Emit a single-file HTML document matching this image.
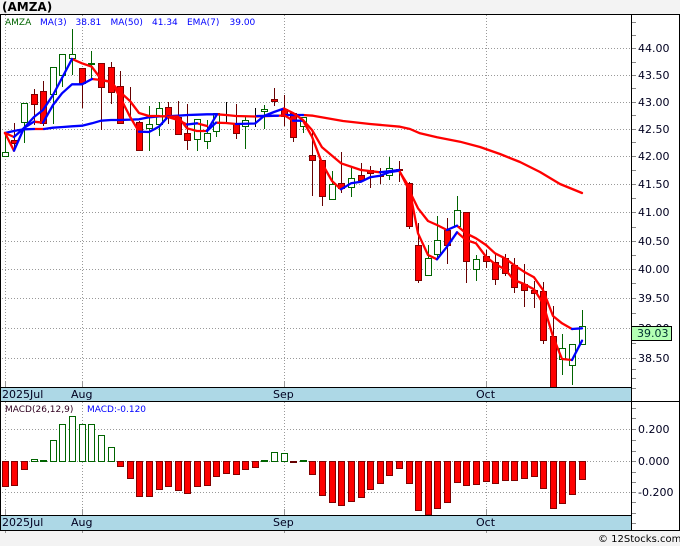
<!DOCTYPE html>
<html><head><meta charset="utf-8"><style>
html,body{margin:0;padding:0;background:#f3f3f3;width:680px;height:546px;overflow:hidden}
svg{display:block}
text{font-family:"DejaVu Sans","Liberation Sans",sans-serif;font-size:11px;fill:#000020}
.c{shape-rendering:crispEdges}
.l{fill:none;stroke-width:2.3;stroke-linejoin:round;stroke-linecap:round}
.r{stroke:#f00}.b{stroke:#00f}
.s{font-size:9px}
</style></head><body>
<svg width="680" height="546" viewBox="0 0 680 546" xmlns="http://www.w3.org/2000/svg">
<rect x="0" y="14" width="680" height="517" fill="#fff" class="c"/>
<text x="2" y="11" style="font-weight:bold;font-size:12px;fill:#000">(AMZA)</text>

<!-- grid -->
<path class="c" fill="none" stroke="#999" stroke-dasharray="1 2" d="M2 48.5H631M2 75.5H631M2 102.5H631M2 129.5H631M2 156.5H631M2 184.5H631M2 212.5H631M2 241.5H631M2 269.5H631M2 298.5H631M2 328.5H631M2 358.5H631M2 429.5H631M2 461.5H631M2 492.5H631"/>
<path class="c" fill="none" stroke="#999" stroke-dasharray="1 2" d="M5.5 15V387M82.5 15V387M284.5 15V387M486.5 15V387M5.5 402V515M82.5 402V515M284.5 402V515M486.5 402V515"/>
<path class="c" fill="none" stroke="#999" d="M5.5 381V387M82.5 381V387M284.5 381V387M486.5 381V387M5.5 509V515M82.5 509V515M284.5 509V515M486.5 509V515M5.5 531V533M82.5 531V533M284.5 531V533M486.5 531V533"/>

<!-- axis ticks -->
<path class="c" fill="none" stroke="#888" d="M632 22.5H636M632 35.5H636M632 48.5H636M632 62.5H636M632 75.5H636M632 88.5H636M632 102.5H636M632 115.5H636M632 129.5H636M632 142.5H636M632 156.5H636M632 170.5H636M632 184.5H636M632 198.5H636M632 212.5H636M632 227.5H636M632 241.5H636M632 255.5H636M632 269.5H636M632 283.5H636M632 298.5H636M632 313.5H636M632 343.5H636M632 358.5H636M632 369.5H636M632 378.5H636M632 388.5H636M632 408.5H636M632 418.5H636M632 429.5H636M632 440.5H636M632 451.5H636M632 461.5H636M632 472.5H636M632 482.5H636M632 492.5H636M632 502.5H636M632 513.5H636M632 523.5H636"/>

<!-- wicks -->
<path class="c" fill="none" stroke="#000" d="M226.5 102V123M255.5 108V127"/>
<path class="c" fill="none" stroke="#660000" d="M14.5 123V151M34.5 89V125M43.5 81V126M82.5 68V108M101.5 63V130M111.5 62V104M120.5 71V123M130.5 87V118M139.5 121V151M168.5 102V124M178.5 101V135M187.5 104V150M236.5 104V139M274.5 88V106M284.5 95V126M293.5 113V142M312.5 132V196M322.5 160V206M341.5 152V193M361.5 163V181M370.5 166V188M380.5 168V184M399.5 161V182M409.5 182V229M418.5 223V283M447.5 218V264M466.5 212V283M486.5 250V268M495.5 253V285M505.5 254V276M514.5 258V293M524.5 264V307M534.5 281V308M543.5 282V344M553.5 306V387"/>
<path class="c" fill="none" stroke="#006400" d="M5.5 133V152M24.5 122V143M53.5 94V124M62.5 75V87M72.5 29V75M91.5 51V78M149.5 106V151M159.5 102V136M197.5 139V151M207.5 120V149M216.5 131V137M245.5 116V149M264.5 105V129M303.5 117V133M332.5 171V184M351.5 168V197M389.5 157V180M428.5 245V258M437.5 216V260M457.5 196V210M476.5 255V281M562.5 334V375M572.5 365V385M582.5 310V326"/>

<!-- candle bodies -->
<path class="c" fill="#fff" stroke="#006400" d="M2.5 152.5h6v4h-6zM21.5 103.5h6v19h-6zM50.5 67.5h6v27h-6zM59.5 54.5h6v21h-6zM69.5 54.5h6v4h-6zM146.5 124.5h6v4h-6zM156.5 108.5h6v16h-6zM194.5 119.5h6v20h-6zM204.5 133.5h6v8h-6zM213.5 113.5h6v18h-6zM242.5 120.5h6v6h-6zM261.5 109.5h6v2h-6zM300.5 117.5h6v9h-6zM329.5 184.5h6v15h-6zM348.5 178.5h6v9h-6zM386.5 168.5h6v7h-6zM425.5 258.5h6v17h-6zM434.5 240.5h6v14h-6zM454.5 210.5h6v16h-6zM473.5 259.5h6v10h-6zM559.5 348.5h6v11h-6zM569.5 344.5h6v21h-6zM579.5 326.5h6v18h-6z"/>
<path class="c" fill="#006400" stroke="#006400" d="M88.5 63.5h6v1h-6z"/>
<path class="c" fill="#f00" stroke="#800000" d="M11.5 140.5h6v3h-6zM31.5 94.5h6v10h-6zM40.5 91.5h6v32h-6zM79.5 68.5h6v15h-6zM98.5 63.5h6v24h-6zM108.5 67.5h6v25h-6zM117.5 86.5h6v37h-6zM136.5 122.5h6v28h-6zM165.5 107.5h6v10h-6zM175.5 117.5h6v17h-6zM184.5 133.5h6v7h-6zM233.5 123.5h6v10h-6zM271.5 99.5h6v2h-6zM281.5 109.5h6v7h-6zM290.5 113.5h6v24h-6zM309.5 155.5h6v5h-6zM319.5 160.5h6v36h-6zM338.5 183.5h6v5h-6zM358.5 175.5h6v5h-6zM367.5 170.5h6v3h-6zM396.5 169.5h6v1h-6zM377.5 175.5h6v1h-6zM406.5 183.5h6v43h-6zM415.5 245.5h6v35h-6zM444.5 230.5h6v15h-6zM463.5 212.5h6v49h-6zM483.5 256.5h6v5h-6zM492.5 262.5h6v17h-6zM502.5 258.5h6v15h-6zM511.5 265.5h6v22h-6zM521.5 284.5h6v6h-6zM531.5 290.5h6v3h-6zM540.5 291.5h6v49h-6zM550.5 336.5h6v51h-6z"/>

<!-- MA50 -->
<path class="l r" d="M34 129L44 129M159 116.3L168 116.3M217 114.3L226 115L236 116L255 116.5L284 115.5M303 115L313 115.7L343 121L370 124L400 126.7L410 129L420 133.3L437 137.3L460 141.7L480 147L500 154L520 162L540 172L560 184L582 193"/>
<path class="l b" d="M5 133L15 130.7L24 129.3L34 129M44 129L53 127.7L63 127L72 126.3L82 125.7L92 123.3L101 120.7L111 120L120 120L139 119.3L149 117.3L159 116.3M168 116.3L178 115.7L188 115L197 114.7L207 114.3L217 114.3M257 116L278 115.7M284 115L303 115"/>
<!-- MA3 -->
<path class="l r" d="M5 133L14 150.7M72 59L82 63.3L91.7 66.7L101.7 80L111 81.7L120 97L130 116.7L139 131.7M168 116.7L178 116.7L187 128.3L197 131L207 131M216 122.7L226 123L236 124M284 115L293 120.7M303 120.7L312 136.7L322 163.3L332 181L341 189.3M399 170.7L409 186.7L418 233.3L428 255L437 259.3M457 232.3L466 240L476 243.3L486 256.7L495 264L505 269.3L514 280L524 284L534 289.3L543 303.3L553 336.7L562 359L572 360"/>
<path class="l b" d="M14 150.7L24 128L34 117L43 110L53 95L62 78L72 59M139 131.7L149 132L159 126.7L168 116.7M207 131L216 122.7M236 124L255 123.5L264 116L274 112L284 108.5M293 120.7L303 120.7M341 189.3L351 183.3L361 181.7L370 177.3L380 175.7L389 172.3L399 170.7M437 259.3L447 246.7L457 232.3M572 360L582 340.7"/>
<!-- EMA7 -->
<path class="l r" d="M5 133L14 137M34 121.7L43 122.7M92 79L101 80L111 82L120 92L130 101L139 113L149 116L159 116M168 117L178 120L187 124.5M197 123.3L207 126M284 108.5L293 113L303 120L312 130L322 147.3L341 163.3L361 170L380 172.3M399 170L409 190L418 208.3L428 221L437 225L447 230M457 225.7L466 233.3L476 238.3L486 245L495 253.3L505 258.3L514 265L524 271.7L534 277.3L543 290L553 316L562 323.3L572 329"/>
<path class="l b" d="M14 137L24 128L34 121.7M43 122.7L53 105L62 93.3L72 84.3L82 84.3L92 79M187 124.5L197 123.3M207 131L217 114.3M380 172.3L399 170M447 230L457 225.7M572 329L582 328.3"/>

<!-- MACD bars -->
<path class="c" fill="#fff" stroke="#006400" d="M31.5 459.5h6V461.5h-6zM50.5 440.5h6V461.5h-6zM59.5 424.5h6V461.5h-6zM69.5 416.5h6V461.5h-6zM79.5 424.5h6V461.5h-6zM88.5 424.5h6V461.5h-6zM98.5 435.5h6V461.5h-6zM108.5 447.5h6V461.5h-6zM271.5 452.5h6V461.5h-6zM281.5 453.5h6V461.5h-6z"/>
<path class="c" fill="#006400" stroke="#006400" d="M40.5 460.5h6V461.5h-6zM261.5 460.5h6V461.5h-6zM300.5 460.5h6V461.5h-6z"/>
<path class="c" fill="#660000" stroke="#660000" d="M290.5 461.5h6V462.5h-6z"/>
<path class="c" fill="#f00" stroke="#800000" d="M2.5 461.5h6V486.5h-6zM11.5 461.5h6V485.5h-6zM21.5 461.5h6V469.5h-6zM117.5 461.5h6V466.5h-6zM127.5 461.5h6V478.5h-6zM136.5 461.5h6V496.5h-6zM146.5 461.5h6V496.5h-6zM156.5 461.5h6V489.5h-6zM165.5 461.5h6V486.5h-6zM175.5 461.5h6V490.5h-6zM184.5 461.5h6V493.5h-6zM194.5 461.5h6V486.5h-6zM204.5 461.5h6V485.5h-6zM213.5 461.5h6V476.5h-6zM223.5 461.5h6V473.5h-6zM233.5 461.5h6V474.5h-6zM242.5 461.5h6V469.5h-6zM252.5 461.5h6V467.5h-6zM309.5 461.5h6V474.5h-6zM319.5 461.5h6V495.5h-6zM329.5 461.5h6V502.5h-6zM338.5 461.5h6V505.5h-6zM348.5 461.5h6V501.5h-6zM358.5 461.5h6V497.5h-6zM367.5 461.5h6V489.5h-6zM377.5 461.5h6V483.5h-6zM386.5 461.5h6V475.5h-6zM396.5 461.5h6V468.5h-6zM406.5 461.5h6V483.5h-6zM415.5 461.5h6V510.5h-6zM425.5 461.5h6V515h-6zM434.5 461.5h6V508.5h-6zM444.5 461.5h6V502.5h-6zM454.5 461.5h6V482.5h-6zM463.5 461.5h6V485.5h-6zM473.5 461.5h6V484.5h-6zM483.5 461.5h6V481.5h-6zM492.5 461.5h6V483.5h-6zM502.5 461.5h6V480.5h-6zM511.5 461.5h6V480.5h-6zM521.5 461.5h6V478.5h-6zM531.5 461.5h6V476.5h-6zM540.5 461.5h6V488.5h-6zM550.5 461.5h6V508.5h-6zM559.5 461.5h6V503.5h-6zM569.5 461.5h6V494.5h-6zM579.5 461.5h6V479.5h-6z"/>

<!-- bands -->
<rect class="c" x="1" y="387" width="630" height="14" fill="#add8e6"/>
<rect class="c" x="1" y="515" width="630" height="15" fill="#add8e6"/>
<path class="c" fill="none" stroke="#000" d="M0 14.5H680M0 387.5H631M0 401.5H680M0 515.5H631M0 530.5H680M0.5 14V531M631.5 14V531M679.5 14V531"/>

<!-- legend -->
<text class="s" x="5" y="25" style="fill:#006400">AMZA</text>
<text class="s" x="40" y="25" style="fill:#0000ff">MA(3)</text>
<text class="s" x="75.5" y="25" style="fill:#0000ff">38.81</text>
<text class="s" x="110.5" y="25" style="fill:#0000ff">MA(50)</text>
<text class="s" x="152" y="25" style="fill:#0000ff">41.34</text>
<text class="s" x="187" y="25" style="fill:#0000ff">EMA(7)</text>
<text class="s" x="229.5" y="25" style="fill:#0000ff">39.00</text>
<text class="s" x="5" y="412" style="fill:#300020">MACD(26,12,9)</text>
<text class="s" x="87" y="412" style="fill:#0000ff">MACD:-0.120</text>

<!-- band labels -->
<text x="2" y="398">2025Jul</text><text x="71" y="398">Aug</text><text x="273" y="398">Sep</text><text x="476" y="398">Oct</text>
<text x="2" y="526">2025Jul</text><text x="71" y="526">Aug</text><text x="273" y="526">Sep</text><text x="476" y="526">Oct</text>

<!-- axis labels -->
<text x="638" y="52">44.00</text><text x="638" y="79">43.50</text><text x="638" y="106">43.00</text><text x="638" y="133">42.50</text><text x="638" y="160">42.00</text><text x="638" y="188">41.50</text><text x="638" y="216">41.00</text><text x="638" y="245">40.50</text><text x="638" y="273">40.00</text><text x="638" y="302">39.50</text><text x="638" y="332">39.00</text><text x="638" y="362">38.50</text>
<text x="638" y="433">0.200</text><text x="638" y="465">0.000</text><text x="638" y="496">-0.200</text>

<rect class="c" x="631.5" y="326.5" width="40" height="14" fill="#b4ffb4" stroke="#000"/>
<text x="637" y="337" style="fill:#003030">39.03</text>

<text x="598" y="542" style="font-size:10px;fill:#000">© 12Stocks.com</text>
</svg>
</body></html>
